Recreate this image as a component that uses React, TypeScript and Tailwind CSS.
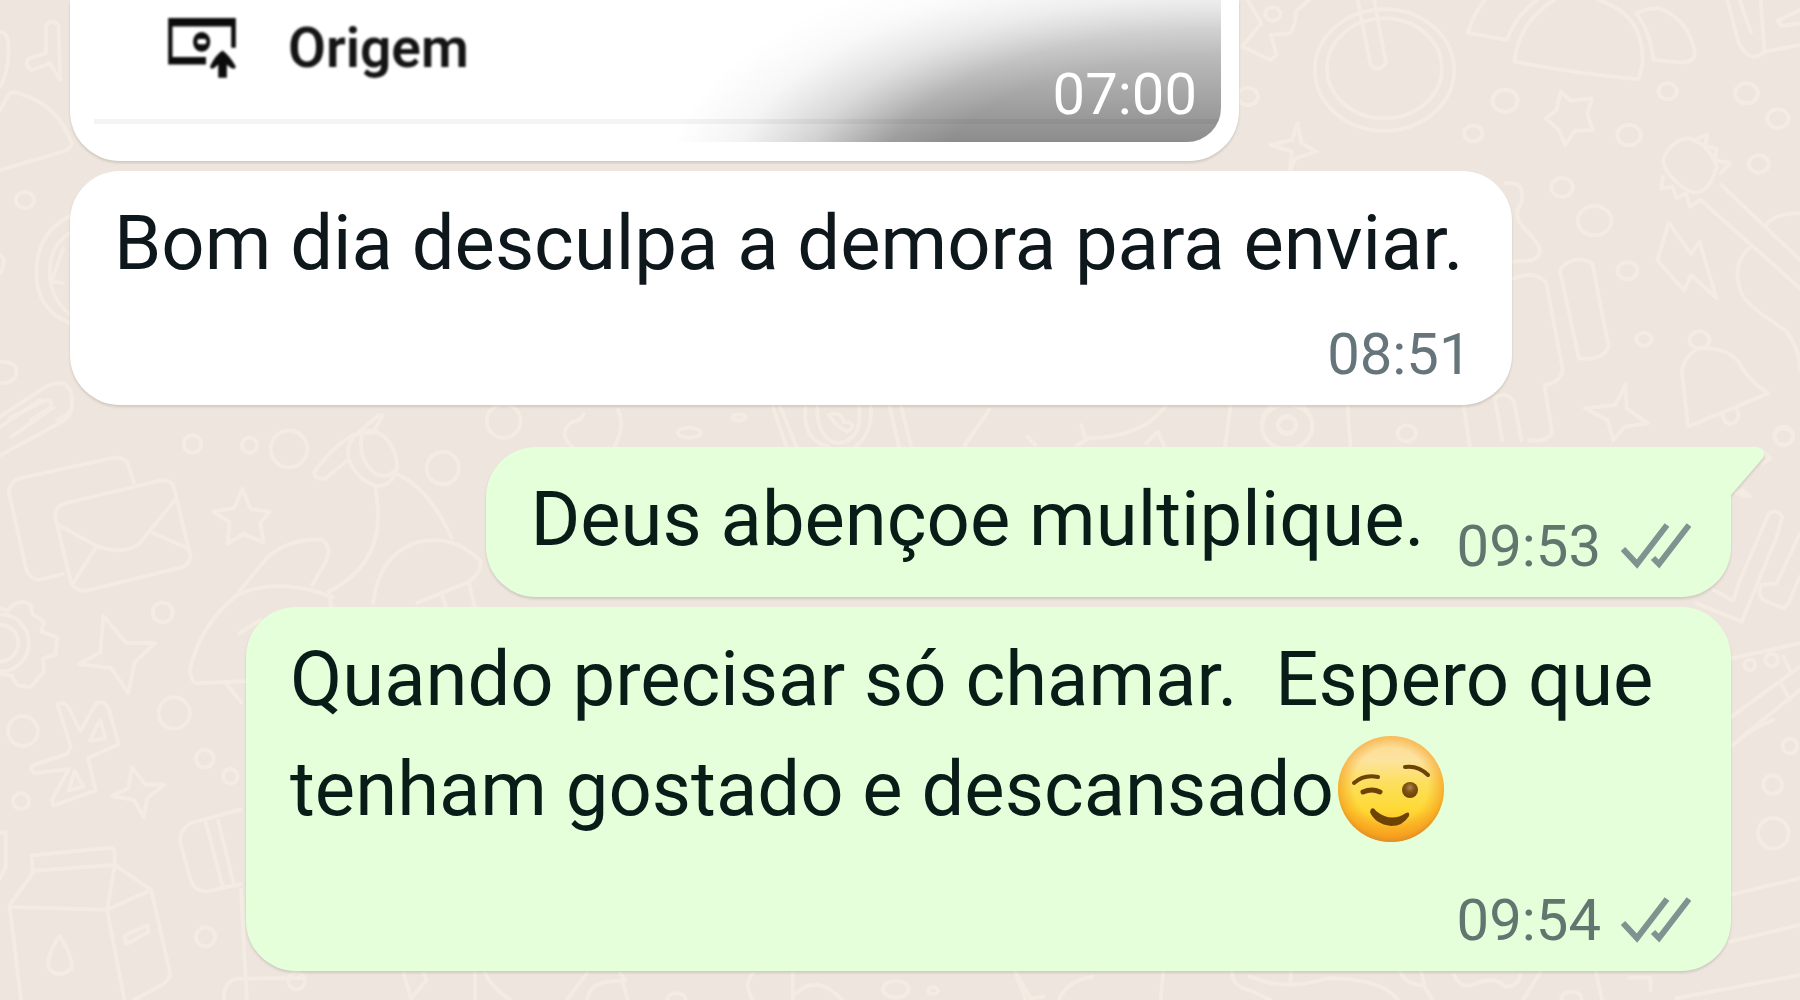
import type { ReactNode } from "react";

type Circle = [number, number, number];

type DoodleGroup = {
  transform: string;
  paths: string[];
  circles: Circle[];
};

// wallpaper line art, one group per area of the chat
const doodles: DoodleGroup[] = [
  {
    // top left
    transform: "scale(0.3827 0.3333)",
    paths: [
      "M0 95Q25 95 22 160Q20 225 0 260",
      "M120 75Q138 55 153 75L157 240M120 75V160L75 175Q60 200 85 210L130 190L157 240",
      "M0 330L22 285Q30 270 55 282Q150 315 188 430Q182 448 165 455L0 510",
      "M180 650Q95 700 95 820Q95 930 185 970M180 700Q128 740 130 820Q132 900 185 945M165 745L135 845L165 850",
      "M0 765Q20 780 0 820",
      "M0 1085Q45 1085 43 1115Q40 1150 0 1150",
      "M0 1250L120 1160Q180 1130 188 1190Q195 1240 150 1260M25 1255L120 1200Q140 1200 130 1225L80 1260",
    ],
    circles: [[65, 600, 24]],
  },
  {
    // top right
    transform: "translate(1200 0) scale(0.3827 0.3333)",
    paths: [
      "M125 0L160 70L110 140L185 180L200 165L185 105L235 100Q250 75 250 35L285 0",
      "M412 0L446 195Q466 220 486 190L455 0",
      "M745 0Q715 40 700 98L802 120Q820 55 880 0",
      "M925 0Q830 70 822 185Q980 220 1145 238Q1165 180 1150 120Q1130 30 1040 0",
      "M1140 40Q1165 25 1200 25Q1280 60 1293 160Q1290 190 1255 187L1185 180Q1175 90 1140 40",
      "M1378 0L1408 130Q1440 195 1475 155L1568 135M1410 0L1440 98M1465 0L1475 155M1568 30L1510 62L1520 78L1568 70",
      "M255 370L240 420L185 435L240 455L235 512M255 370L265 430L305 455L250 475L235 512",
      "M942 275L968 302L1024 295L1012 340L1026 390L980 392L955 435L938 390L903 355L932 330Z",
      "M800 550Q850 540 840 610Q810 650 860 700Q910 760 870 780L820 785",
      "M1350 500Q1330 590 1280 575Q1215 530 1210 480Q1230 420 1275 415Q1330 430 1350 500Z",
      "M1290 420L1325 405L1320 440L1350 445L1345 480L1385 490L1360 520M1210 530L1205 565L1235 560L1245 595L1270 580L1280 620L1308 600",
      "M1362 555L1568 780M1308 600L1568 865M1480 675Q1500 640 1568 640M1440 740Q1385 790 1415 880Q1430 920 1530 990Q1568 1050 1568 1110",
      "M1225 668L1195 780L1265 872L1283 825L1350 895L1305 725L1283 762Z",
      "M940 810Q975 760 1025 790L1068 1040Q1050 1085 990 1075Z",
      "M820 835Q880 810 905 850L948 1110Q940 1150 900 1155L920 1300Q900 1330 860 1320M770 1195Q800 1170 820 1205L840 1320M770 1195L790 1320",
      "M1302 1045Q1250 1080 1262 1140L1275 1280L1485 1180Q1430 1140 1410 1090Q1380 1040 1302 1045ZM1365 1245Q1375 1285 1400 1265Q1415 1245 1400 1225",
      "M1112 1155L1085 1215L1005 1225L1065 1260L1080 1320M1112 1155L1115 1225L1170 1270L1110 1280L1080 1320",
    ],
    circles: [
      [190, 42, 20],
      [482, 210, 182],
      [482, 205, 150],
      [125, 290, 26],
      [797, 302, 33],
      [714, 400, 24],
      [1222, 274, 24],
      [1428, 280, 30],
      [1510, 356, 28],
      [1121, 405, 31],
      [1460, 492, 26],
      [946, 562, 28],
      [1031, 662, 44],
      [1117, 812, 26],
      [1160, 1018, 20],
      [1305, 1020, 26],
      [228, 1280, 66],
      [228, 1275, 24],
      [540, 1300, 24],
      [1525, 1310, 24],
    ],
  },
  {
    // left column
    transform: "translate(0 400) scale(0.3827)",
    paths: [
      "M0 70L105 0M0 145L165 55Q190 40 188 0M30 95L140 20",
      "M165 455L100 470Q75 465 68 440L23 240Q25 215 50 205L300 150Q330 150 335 170L350 215",
      "M143 300Q145 278 170 270L420 210Q450 208 455 230L498 410Q495 430 475 437L225 498Q195 500 185 475Z",
      "M150 325L250 380Q310 405 360 380L460 258M190 480L250 385M395 345L495 390",
      "M633 232L655 285L705 292L680 320L688 372L637 350L595 375L600 320L558 292L612 282Z",
      "M1000 40L975 85L925 90Q870 120 820 190Q825 210 850 205L905 160M935 85L990 40",
      "M975 80Q1030 100 1038 170Q1030 225 985 225Q930 210 910 150Q905 95 950 82ZM945 95Q935 160 985 195Q1015 205 1035 180",
      "M980 228Q1020 420 860 500L865 540M1040 195Q1120 230 1180 360M975 530Q990 410 1080 375Q1180 345 1255 420Q1260 450 1225 475L1240 540M1225 475L1090 530M1155 510L1165 540",
      "M640 735L510 740Q490 720 500 690Q530 580 620 510Q720 460 870 515M625 500L700 410Q760 360 840 365Q870 380 850 425L815 485M590 740L630 790M680 575L625 610",
      "M0 545L20 550Q40 525 65 528L80 535L85 560L115 580L108 605L150 620L145 665L112 675L115 710L80 750L45 745L30 720L0 715",
      "M270 565L330 635L405 635L352 685L335 765L290 700L205 690L262 660Z",
      "M150 795Q165 785 180 805L210 865L250 795Q275 780 285 810L310 900L230 935L250 1020L140 1060L135 1045L180 965L90 975Q75 965 85 955L175 925L185 905Z",
      "M262 835L275 885L235 890ZM195 970L218 1010L180 1020Z",
      "M345 960L380 1005L430 1005L385 1040L375 1090L350 1045L293 1035L335 1015Z",
      "M0 1130H15V1220L0 1250",
      "M83 1190L285 1170Q300 1170 300 1190V1215L85 1230ZM90 1230L25 1320L55 1568M25 1325L280 1332L300 1215L395 1280L445 1500Q440 1520 420 1530L350 1568M280 1332L325 1568M280 1332L395 1280",
      "M155 1400Q120 1455 128 1485Q155 1515 187 1485Q190 1450 155 1400ZM325 1400L385 1372L388 1390L330 1422Z",
      "M630 1070L500 1105Q465 1125 472 1160L500 1260Q515 1290 550 1282L630 1265M538 1105L582 1270M570 1100L610 1260",
      "M630 1280L645 1568M585 1568Q585 1510 630 1512L790 1510",
    ],
    circles: [
      [0, 635, 75],
      [0, 635, 48],
      [503, 115, 23],
      [652, 118, 20],
      [755, 128, 48],
      [1157, 178, 42],
      [1316, 55, 44],
      [425, 555, 26],
      [455, 818, 41],
      [60, 865, 39],
      [535, 937, 23],
      [602, 983, 19],
      [55, 1048, 21],
      [537, 1403, 25],
      [775, 1518, 22],
    ],
  },
  {
    // strip between received and sent bubbles
    transform: "translate(400 390) scale(0.7653 0.3333)",
    paths: [
      "M240 72Q235 95 225 95Q205 130 225 170M285 60Q295 110 280 170",
      "M487 50L505 170M497 50L518 170M640 50L652 170M655 50L668 170",
      "M530 50Q525 150 560 170M615 50Q618 130 595 170M545 50Q545 145 572 160Q605 150 600 50",
      "M560 75Q575 60 580 95Q600 100 585 125Q570 110 560 75Z",
      "M770 60L738 165M1000 50Q970 140 900 145L885 165M890 105L895 140M975 160L990 125L998 165",
      "M1085 50L1078 170M1238 50L1242 170M1390 50L1398 170M820 140L830 165",
    ],
    circles: [
      [378, 128, 15],
      [443, 82, 9],
    ],
  },
  {
    // right column
    transform: "translate(1660 380) scale(0.3333)",
    paths: [
      "M310 215L330 235L310 250M230 340L250 330L270 350Z",
      "M160 630L220 662L240 600L325 405Q345 380 367 410L350 470L245 725L110 670",
      "M420 460L350 610L305 615Q290 640 310 660L370 685L385 670L420 590",
      "M215 835L420 790M215 1010L420 860M240 1075L420 930M370 830L395 880M360 905L390 960",
    ],
    circles: [
      [371, 168, 28],
      [335, 840, 19],
      [270, 855, 16],
    ],
  },
  {
    // bottom right
    transform: "translate(1300 720) scale(0.3333)",
    paths: [
      "M1300 75Q1350 25 1420 0",
      "M1290 525L1500 475M1290 665L1500 615M1130 835L1500 765",
    ],
    circles: [
      [1470, 78, 22],
      [1418, 194, 28],
      [1420, 340, 46],
    ],
  },
  {
    // bottom edge, left half
    transform: "translate(230 960) scale(0.5102 0.3333)",
    paths: [
      "M340 40L355 115L385 60L380 40M480 40V120M500 40Q510 80 550 120",
      "M700 40L660 120M700 120Q705 70 740 65L775 60L765 40M770 70L780 120",
      "M1025 40Q1005 70 1025 120M1103 40V120M1110 100Q1150 40 1200 120M1540 40L1560 120",
    ],
    circles: [
      [1305, 88, 25],
      [1378, 92, 10],
      [875, 118, 18],
    ],
  },
  {
    // bottom edge, right half
    transform: "translate(1000 955) scale(0.5102 0.3333)",
    paths: [
      "M30 50L60 130L85 125M180 65Q130 80 115 135M320 50L315 135",
      "M455 50Q455 95 490 105L530 135M490 65Q560 110 640 70Q750 70 780 135M570 50V90",
      "M785 50Q795 90 830 90L848 135M825 50L832 90M890 60Q900 100 925 90Q970 60 990 95Q1015 95 1020 60M1060 50L1025 135",
      "M1168 50L1180 135M1235 68H1275V105",
    ],
    circles: [[1120, 130, 20]],
  },
  {
    // camera lens above the sent bubble
    transform: "translate(1287 425)",
    paths: [],
    circles: [
      [0, 0, 25],
      [0, 0, 9],
    ],
  },
];

function Wallpaper() {
  return (
    <svg
      aria-hidden="true"
      viewBox="0 0 1800 1000"
      preserveAspectRatio="xMinYMin slice"
      className="absolute inset-0 h-full w-full fill-none stroke-[#f4ebe3] stroke-4"
      strokeLinecap="round"
      strokeLinejoin="round"
    >
      {doodles.map((group) => (
        <g key={group.transform} transform={group.transform}>
          {group.paths.map((d) => (
            <path key={d} d={d} vectorEffect="non-scaling-stroke" />
          ))}
          {group.circles.map(([cx, cy, r]) => (
            <circle key={`${cx}-${cy}-${r}`} cx={cx} cy={cy} r={r} vectorEffect="non-scaling-stroke" />
          ))}
        </g>
      ))}
    </svg>
  );
}

function OriginIcon() {
  return (
    <svg aria-hidden="true" viewBox="0 0 204 184" className="h-[61px] w-[68px] shrink-0 blur-[1px]">
      <path
        d="M0 0H204V90H190V26H13V118H114V140H0Z"
        fill="#0c0c0c"
      />
      <ellipse cx="101" cy="72" rx="26" ry="30" fill="#0c0c0c" />
      <rect x="88" y="63" width="27" height="16" rx="6" fill="#ffffff" />
      <path
        d="M164 98Q184 112 204 146L200 154L188 150L177 140V180H151V140L140 150L130 154L126 146Q142 112 164 98Z"
        fill="#0c0c0c"
      />
    </svg>
  );
}

function DoubleCheck() {
  return (
    <svg
      role="img"
      aria-label="Entregue"
      viewBox="0 0 70 46"
      className="h-[46px] w-[70px] shrink-0 fill-none stroke-[#7f9390] stroke-6"
    >
      <path d="M2 26L16 41L46 2" />
      <path d="M32 35L38 41L68 2" />
    </svg>
  );
}

function WinkEmoji() {
  return (
    <svg
      role="img"
      aria-label="😉"
      viewBox="0 0 106 106"
      className="ml-1 inline-block h-[106px] w-[106px] align-[-27px]"
    >
      <defs>
        <linearGradient id="face" x1="0" y1="0" x2="0" y2="1">
          <stop offset="0" stopColor="#fbd98e" />
          <stop offset="0.22" stopColor="#fde3a0" />
          <stop offset="0.45" stopColor="#fcdf5c" />
          <stop offset="0.7" stopColor="#fed934" />
          <stop offset="1" stopColor="#fba11e" />
        </linearGradient>
        <radialGradient id="rim" cx="0.5" cy="0.46" r="0.54">
          <stop offset="0.65" stopColor="#f59a1c" stopOpacity="0" />
          <stop offset="0.9" stopColor="#f59a1c" stopOpacity="0.6" />
          <stop offset="1" stopColor="#d98c2a" stopOpacity="0.9" />
        </radialGradient>
        <radialGradient id="eye" cx="0.5" cy="0.35" r="0.6">
          <stop offset="0" stopColor="#b08550" />
          <stop offset="0.5" stopColor="#7f5212" />
          <stop offset="1" stopColor="#6d4205" />
        </radialGradient>
      </defs>
      <circle cx="53" cy="53" r="53" fill="url(#face)" />
      <circle cx="53" cy="53" r="53" fill="url(#rim)" />
      <g fill="none" stroke="#6d4205" strokeLinecap="round">
        <path d="M16 47Q26 38 40 41" strokeWidth="4" />
        <path d="M67 31Q80 29 90 39" strokeWidth="4" />
        <path d="M25 56Q34 52 42 56" strokeWidth="5" />
      </g>
      <circle cx="72" cy="54" r="8" fill="url(#eye)" />
      <path d="M33 73Q36 71 38 75Q53 87 68 77Q72 75 71 80Q65 90 53 90Q37 88 32 76Z" fill="#6d4205" />
    </svg>
  );
}

function Bubble({
  sent = false,
  tail = false,
  className = "",
  children,
}: {
  sent?: boolean;
  tail?: boolean;
  className?: string;
  children: ReactNode;
}) {
  return (
    <article
      className={`relative flex rounded-[50px] py-[17px] pr-10 drop-shadow-[0_2px_1px_rgba(60,60,30,0.16)] ${
        sent ? "self-end bg-[#e5ffdb] pl-11 text-[#0a1c17]" : "self-start bg-white pl-11 text-[#0e171b]"
      } ${tail ? "rounded-tr-none" : ""} ${className}`}
    >
      {children}
      {tail && (
        <svg
          aria-hidden="true"
          viewBox="0 0 36 49"
          className="absolute top-0 -right-[35px] h-[49px] w-9 fill-[#e5ffdb]"
        >
          <path d="M0 0H27Q37 2 33 11L1 48V49H0Z" />
        </svg>
      )}
    </article>
  );
}

function Meta({ time, sent = false, className = "" }: { time: string; sent?: boolean; className?: string }) {
  return (
    <div
      className={`flex items-center justify-end gap-5 text-[58px] leading-[68px] ${
        sent ? "text-[#60766f]" : "text-[#66757b]"
      } ${className}`}
    >
      <time>{time}</time>
      {sent && <DoubleCheck />}
    </div>
  );
}

export default function App() {
  return (
    <main className="relative min-h-screen overflow-hidden bg-[#ede5de] font-['Roboto',sans-serif]">
      <Wallpaper />

      <div className="relative flex flex-col pr-[69px] pb-6 pl-[70px]">
        {/* photo message */}
        <article className="w-full max-w-[1169px] self-start rounded-b-[50px] bg-white px-[18px] pb-[19px] drop-shadow-[0_2px_1px_rgba(60,60,30,0.16)]">
          <div className="relative overflow-hidden rounded-br-[34px] pt-4 pb-[18px]">
            <div className="flex items-center gap-[52px] pl-20">
              <OriginIcon />
              <span className="text-[55px] leading-[64px] font-semibold text-[#141414] blur-[1px]">Origem</span>
            </div>
            <hr className="mt-[39px] ml-1.5 h-[5px] border-0 bg-[#f4f4f4]" />
            <div className="absolute inset-0 bg-linear-to-b from-black/15 to-black/45 [mask-image:radial-gradient(560px_260px_at_100%_190px,black_52%,rgb(0_0_0/0.85)_62%,rgb(0_0_0/0.4)_75%,rgb(0_0_0/0.1)_88%,transparent)]" />
            <time className="absolute right-6 bottom-3.5 text-[58px] leading-[68px] text-white">07:00</time>
          </div>
        </article>

        <Bubble className="mt-2.5 flex-col">
          <p className="pr-2 text-[76px] leading-[110px]">Bom dia desculpa a demora para enviar.</p>
          <Meta time="08:51" className="mt-[22px]" />
        </Bubble>

        <Bubble sent tail className="mt-[42px] items-end gap-8">
          <p className="pb-1.5 text-[76px] leading-[110px]">Deus abençoe multiplique.</p>
          <Meta time="09:53" sent />
        </Bubble>

        <Bubble sent className="mt-2.5 max-w-[1485px] flex-col">
          <p className="text-[76px] leading-[110px] whitespace-pre-wrap">
            {"Quando precisar só chamar.  Espero que tenham gostado e descansado"}
            <WinkEmoji />
          </p>
          <Meta time="09:54" sent className="mt-[42px]" />
        </Bubble>
      </div>
    </main>
  );
}
